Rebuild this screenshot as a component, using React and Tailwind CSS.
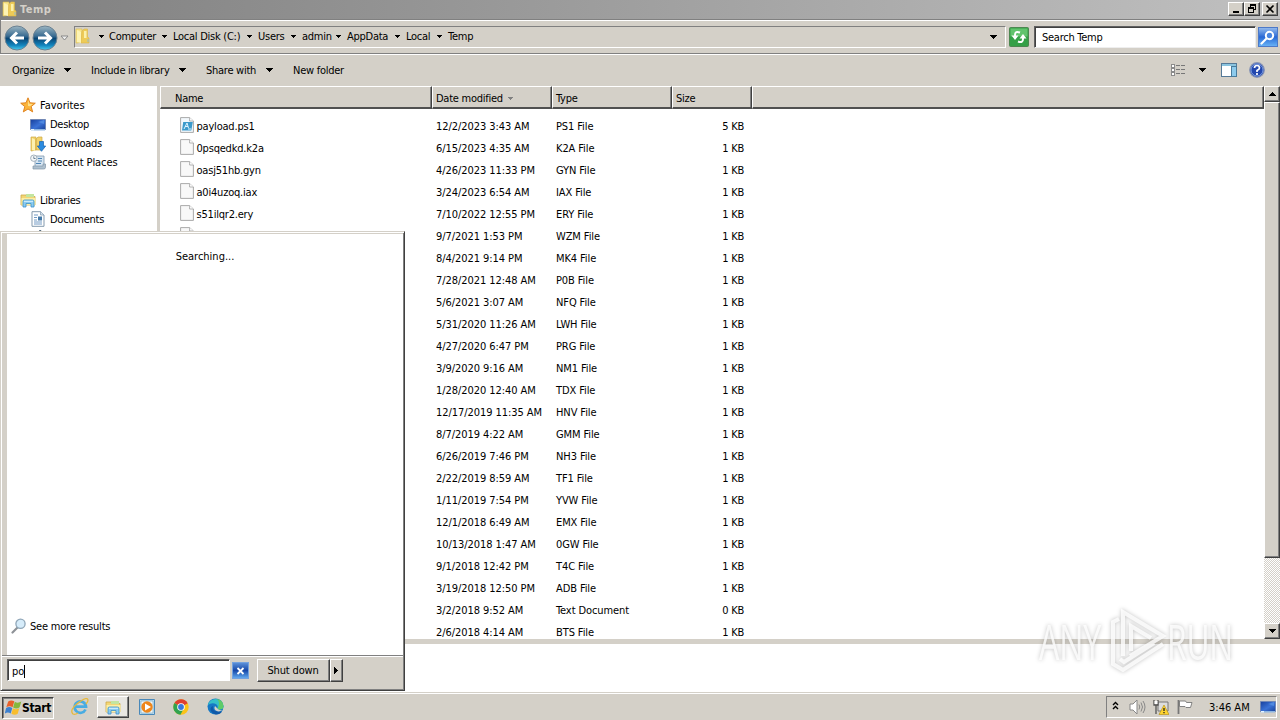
import React from 'react';
import clsx from 'clsx';

const FILES = [
  ['payload.ps1', '12/2/2023 3:43 AM', 'PS1 File', '5 KB'],
  ['0psqedkd.k2a', '6/15/2023 4:35 AM', 'K2A File', '1 KB'],
  ['oasj51hb.gyn', '4/26/2023 11:33 PM', 'GYN File', '1 KB'],
  ['a0i4uzoq.iax', '3/24/2023 6:54 AM', 'IAX File', '1 KB'],
  ['s51ilqr2.ery', '7/10/2022 12:55 PM', 'ERY File', '1 KB'],
  ['', '9/7/2021 1:53 PM', 'WZM File', '1 KB'],
  ['', '8/4/2021 9:14 PM', 'MK4 File', '1 KB'],
  ['', '7/28/2021 12:48 AM', 'P0B File', '1 KB'],
  ['', '5/6/2021 3:07 AM', 'NFQ File', '1 KB'],
  ['', '5/31/2020 11:26 AM', 'LWH File', '1 KB'],
  ['', '4/27/2020 6:47 PM', 'PRG File', '1 KB'],
  ['', '3/9/2020 9:16 AM', 'NM1 File', '1 KB'],
  ['', '1/28/2020 12:40 AM', 'TDX File', '1 KB'],
  ['', '12/17/2019 11:35 AM', 'HNV File', '1 KB'],
  ['', '8/7/2019 4:22 AM', 'GMM File', '1 KB'],
  ['', '6/26/2019 7:46 PM', 'NH3 File', '1 KB'],
  ['', '2/22/2019 8:59 AM', 'TF1 File', '1 KB'],
  ['', '1/11/2019 7:54 PM', 'YVW File', '1 KB'],
  ['', '12/1/2018 6:49 AM', 'EMX File', '1 KB'],
  ['', '10/13/2018 1:47 AM', '0GW File', '1 KB'],
  ['', '9/1/2018 12:42 PM', 'T4C File', '1 KB'],
  ['', '3/19/2018 12:50 PM', 'ADB File', '1 KB'],
  ['', '3/2/2018 9:52 AM', 'Text Document', '0 KB'],
  ['', '2/6/2018 4:14 AM', 'BTS File', '1 KB'],
];

const CRUMBS = [
  { label: 'Computer', width: 'w-[64px]' },
  { label: 'Local Disk (C:)', width: 'w-[85px]' },
  { label: 'Users', width: 'w-[44px]' },
  { label: 'admin', width: 'w-[45px]' },
  { label: 'AppData', width: 'w-[59px]' },
  { label: 'Local', width: 'w-[42px]' },
  { label: 'Temp', width: 'w-[40px]' },
];

const RAISED = 'bg-[#d4d0c8] border border-t-white border-l-white border-r-[#404040] border-b-[#404040] shadow-[inset_-1px_-1px_0_#808080]';
const SUNKEN = 'border border-t-[#808080] border-l-[#808080] border-r-white border-b-white';

function Caret({ small, className }) {
  return small ? (
    <svg width="5" height="3" shapeRendering="crispEdges" className={clsx('shrink-0', className)}>
      <path d="M0 0h5v1H0zM1 1h3v1H1zM2 2h1v1H2z" fill="currentColor" />
    </svg>
  ) : (
    <svg width="7" height="4" shapeRendering="crispEdges" className={clsx('shrink-0', className)}>
      <path d="M0 0h7v1H0zM1 1h5v1H1zM2 2h3v1H2zM3 3h1v1H3z" fill="currentColor" />
    </svg>
  );
}

function FolderIcon({ size = 16, className }) {
  return (
    <svg width={size} height={size} viewBox="0 0 16 16" className={clsx('shrink-0', className)}>
      <path d="M1 1h6v13l-5 1H1z" fill="#f7e48c" stroke="#d9b94c" strokeWidth=".6" />
      <path d="M7 3l2-2h3.500v8l1.500 1v5H6z" fill="#eecb57" stroke="#dcb548" strokeWidth=".6" />
      <path d="M2 2l4 2v11l-4-1z" fill="#fdf3b4" />
      <path d="M9 3h2.500v7H9z" fill="#fbf0aa" />
      <path d="M12.500 11h1v3h-1z" fill="#93b9cc" />
    </svg>
  );
}

function LibraryIcon({ size = 17, className }) {
  return (
    <svg width={size} height={size} viewBox="0 0 17 17" className={clsx('shrink-0', className)}>
      <path d="M1 3h5l1 1.500h8V13H1z" fill="#f3d675" stroke="#cda94a" strokeWidth=".8" />
      <path d="M6 2h8v3H6z" fill="#c3e5a0" />
      <path d="M1.500 6h14v7h-14z" fill="#fbeea5" />
      <path d="M3 9.500Q3 8 4.500 8h8Q14 8 14 9.500V15h-3v-3.500H6V15H3z" fill="#8acbf0" stroke="#3c91c9" strokeWidth=".8" />
      <path d="M4 9.300h9" stroke="#d9f2ff" />
    </svg>
  );
}

function StarIcon() {
  return (
    <svg width="16" height="16" viewBox="0 0 16 16" className="relative -top-px shrink-0">
      <path d="M8 .8l2 5 5.300.4-4.100 3.400 1.500 5.300L8 12l-4.700 2.900 1.500-5.300L.7 6.200 6 5.800z" fill="#fbb43a" stroke="#dd7c16" strokeWidth=".9" strokeLinejoin="round" />
      <path d="M8 3l1.200 3.700 3.800.4-3 2.100L8 9z" fill="#fee08a" />
    </svg>
  );
}

function DesktopIcon() {
  return (
    <svg width="16" height="14" viewBox="0 0 16 14" className="shrink-0">
      <defs>
        <linearGradient id="desk" x1="0" y1="0" x2="1" y2="1">
          <stop offset="0" stopColor="#173f9c" />
          <stop offset=".55" stopColor="#3a72d6" />
          <stop offset="1" stopColor="#1a4299" />
        </linearGradient>
      </defs>
      <path d="M.5 1.500h15v10H.5z" fill="url(#desk)" stroke="#7288b5" />
      <path d="M1 11h14v1.500H1z" fill="#8fb7e2" />
      <path d="M1 11h3v1.500H1z" fill="#e6f4ff" />
      <path d="M8 4l6-2v4z" fill="#5f9be8" opacity=".6" />
    </svg>
  );
}

function DownloadsIcon() {
  return (
    <svg width="16" height="16" viewBox="0 0 16 16" className="shrink-0">
      <path d="M1 1h5v13l-5 1zM6 3l2-2h4v13H6z" fill="#f2d36b" stroke="#cfab45" strokeWidth=".7" />
      <path d="M2 2l3 1.500V15l-3-1z" fill="#fcf1b0" />
      <path d="M9.500 5.500h4V10h2.200l-4.200 5.300L7.300 10h2.200z" fill="#2b8be0" stroke="#1661b0" strokeWidth=".7" />
    </svg>
  );
}

function RecentIcon() {
  return (
    <svg width="16" height="16" viewBox="0 0 16 16" className="relative -top-px shrink-0">
      <path d="M5 2h9v11H5z" fill="#d5e4f1" stroke="#8197ad" strokeWidth=".8" />
      <path d="M3 12h10v-2h2.500v3.500q0 1.500-2 1.500H3z" fill="#aec0cf" stroke="#8295a6" strokeWidth=".7" />
      <path d="M8 4.500h4M8 7h4M6 9.500h5" stroke="#4e85b5" />
      <circle cx="3.800" cy="4.200" r="3.200" fill="#f4f7f9" stroke="#9aa8b4" strokeWidth=".9" />
      <path d="M3.800 2.300v2.200h1.800" stroke="#526a80" fill="none" strokeWidth=".8" />
    </svg>
  );
}

function DocumentIcon() {
  return (
    <svg width="14" height="16" viewBox="0 0 14 16" className="relative -top-px shrink-0">
      <path d="M1 .7h8.500L13 4v11.300H1z" fill="#fff" stroke="#8399ad" />
      <path d="M9.500.7V4H13" fill="#d7e3ee" stroke="#8399ad" strokeWidth=".7" />
      <path d="M3 4h4M3 6.500h3M3 9h3M3 11h8M3 13h8" stroke="#628fbd" strokeWidth=".9" />
      <path d="M7 5.500h4v4H7z" fill="#4479a8" />
    </svg>
  );
}

function MusicIcon() {
  return (
    <svg width="14" height="16" viewBox="0 0 14 16" className="relative -top-px shrink-0">
      <path d="M7 12V0q1 3 4 4" fill="none" stroke="#596d7c" strokeWidth="1.600" />
      <ellipse cx="5" cy="12.500" rx="3" ry="2.300" fill="#2b7ec3" />
    </svg>
  );
}

function FileIcon({ script }) {
  return (
    <svg width="14" height="16" viewBox="0 0 14 16" className="relative -top-px shrink-0">
      <path d="M.6.6h9L13.400 4v11.400H.6z" fill={script ? '#f3f9fd' : '#f8f8f8'} stroke="#a0a0a0" strokeWidth=".9" />
      <path d="M9.600.6V4h3.800" fill="#fff" stroke="#a0a0a0" strokeWidth=".8" />
      {script && (
        <>
          <path d="M3.200 5h9.600l-1.500 8.500H2z" fill="#3c9acb" />
          <path d="M4 12l3-6 1.500 5M8 12h3M5 9.500h3" stroke="#dff4ff" fill="none" />
        </>
      )}
    </svg>
  );
}

function NavButton({ back }) {
  return (
    <svg width="26" height="26" viewBox="0 0 26 26" className="shrink-0">
      <defs>
        <linearGradient id={back ? 'nb' : 'nf'} x1="0" y1="0" x2="0" y2="1">
          <stop offset="0" stopColor="#9db6c2" />
          <stop offset=".42" stopColor="#3a6c92" />
          <stop offset=".52" stopColor="#0a4675" />
          <stop offset=".8" stopColor="#1284bd" />
          <stop offset="1" stopColor="#49cbed" />
        </linearGradient>
      </defs>
      <circle cx="13" cy="13" r="12" fill={back ? 'url(#nb)' : 'url(#nf)'} stroke="#6c8292" strokeWidth="1" />
      <path
        d="M20 13H8M13 7.500L7.500 13l5.500 5.500"
        transform={back ? undefined : 'rotate(180 13 13)'}
        fill="none"
        stroke="#fff"
        strokeWidth="3"
      />
    </svg>
  );
}

function Magnifier({ className, light }) {
  return (
    <svg width="16" height="16" viewBox="0 0 16 16" className={clsx('shrink-0', className)}>
      <path d="M6.500 9.500L1.500 14.500" stroke={light ? '#fff' : '#8e9297'} strokeWidth="2.200" strokeLinecap="round" />
      <circle
        cx="9.500"
        cy={light ? 6.5 : 5.8}
        r={light ? 3.7 : 4.6}
        fill={light ? '#4a86e0' : '#d6ecfa'}
        stroke={light ? '#fff' : '#8fa6b8'}
        strokeWidth={light ? 2 : 1.3}
      />
    </svg>
  );
}

function TitleBar() {
  return (
    <div className="flex h-[19px] items-center bg-linear-to-r from-[#808080] to-[#c0c0c0] pl-[2px]">
      <FolderIcon className="relative -top-px mr-[2px]" />
      <span className="flex-1 font-bold text-[#d4d0c8] tracking-[0.5px]">Temp</span>
      <div className="relative -top-px flex pr-[2px]">
        <span className={`flex h-[14px] w-4 items-center justify-center ${RAISED}`}>
          <svg width="10" height="10" shapeRendering="crispEdges"><path d="M2 7h6v2H2z" /></svg>
        </span>
        <span className={`flex h-[14px] w-4 items-center justify-center ${RAISED}`}>
          <svg width="10" height="10" shapeRendering="crispEdges">
            <path d="M3 0h6v2H3zM3 2h1v1H3zM8 2h1v4H8zM7 5h1v1H7zM1 3h6v2H1zM1 5h1v4H1zM6 5h1v4H6zM1 8h6v1H1z" />
          </svg>
        </span>
        <span className={`ml-[2px] flex h-[14px] w-4 items-center justify-center ${RAISED}`}>
          <svg width="10" height="10" viewBox="0 0 10 10"><path d="M1.500 1.500l7 7M8.500 1.500l-7 7" stroke="#000" strokeWidth="1.600" /></svg>
        </span>
      </div>
    </div>
  );
}

function AddressBar() {
  return (
    <div className="flex h-[35px] items-center border-t border-b border-l border-[#808080] pl-[3px] shadow-[inset_0_1px_0_#fff,0_1px_0_#fff]">
      <span className="mt-[2px] flex gap-[2px]">
        <NavButton back />
        <NavButton />
      </span>
      <svg width="9" height="6" className="mt-[2px] ml-[2px] shrink-0"><path d="M1 1h7L4.500 5z" fill="#eee" stroke="#898989" /></svg>
      <div className={`ml-[5px] mr-[3px] flex h-[22px] flex-1 items-center ${SUNKEN}`}>
        <FolderIcon className="-mt-px" />
        <Caret small className="ml-2" />
        <div className="ml-[4px] flex flex-1">
          {CRUMBS.map((c, i) => (
            <span key={c.label} className={`flex items-center justify-between pl-px whitespace-nowrap ${c.width}`}>
              {c.label}
              {i < CRUMBS.length - 1 && <Caret small className="mr-[5px]" />}
            </span>
          ))}
        </div>
        <Caret className="mr-[8px]" />
      </div>
      <svg width="20" height="20" viewBox="0 0 20 20" className="shrink-0">
        <rect x=".5" y=".5" width="19" height="19" rx="1" fill="#35a047" stroke="#4c8750" />
        <path d="M1.500 1.500h17v8h-17z" fill="#62c36d" />
        <path d="M11 5.500Q6 3.500 6 8v2M9 14.500q5 2 5-2.500v-2" fill="none" stroke="#fff" strokeWidth="2" />
        <path d="M2.500 8.500h7L6 13zM10.500 11.500h7L14 7z" fill="#fff" />
      </svg>
      <div className="ml-[5px] flex h-[22px] w-[222px] items-center border border-t-[#606060] border-l-[#606060] border-r-[#eee] border-b-[#eee] bg-white pt-[2px] pl-[7px] shadow-[inset_1px_1px_0_#404040]">
        Search Temp
      </div>
      <span className="ml-[2px] mr-[2px] flex size-5 items-center justify-center border border-[#4d79c7] bg-linear-to-b from-[#91b8eb] via-[#2868d5] to-[#67b1f5]">
        <Magnifier light />
      </span>
    </div>
  );
}

function Toolbar() {
  return (
    <div className="flex h-[32px] items-center pl-3">
      <span className="flex w-[79px] items-center">Organize<Caret className="ml-auto mr-5" /></span>
      <span className="flex w-[115px] items-center">Include in library<Caret className="ml-auto mr-5" /></span>
      <span className="flex w-[87px] items-center">Share with<Caret className="ml-auto mr-5" /></span>
      <span className="flex-1">New folder</span>
      <svg width="16" height="14" shapeRendering="crispEdges">
        <path d="M1 1h3v3H1zM1 5h3v3H1zM1 9h3v3H1z" fill="#fff" stroke="#8b8b8b" />
        <path d="M6 2h4M11 2h4M6 6h4M11 6h4M6 10h4M11 10h4" stroke="#777" />
      </svg>
      <Caret className="ml-[13px]" />
      <svg width="16" height="14" shapeRendering="crispEdges" className="ml-[15px]">
        <path d="M.5.5h15v13H.5z" fill="#fff" stroke="#557997" />
        <path d="M1 1h14v2H1z" fill="#8ac4df" />
        <path d="M10 3h5v10h-5z" fill="#8dcbed" stroke="#487b9c" />
      </svg>
      <svg width="16" height="16" viewBox="0 0 16 16" className="ml-3 mr-[15px]">
        <circle cx="8" cy="8" r="7.300" fill="#2448ae" stroke="#8995b5" strokeWidth="1.200" />
        <circle cx="8" cy="8" r="6" fill="none" stroke="#8fb0ec" strokeWidth=".8" />
        <path d="M5.500 6q0-2.500 2.500-2.500T10.500 6Q10.500 7.300 8 8.500V10M8 11v2" fill="none" stroke="#fff" strokeWidth="1.700" />
      </svg>
    </div>
  );
}

function Sidebar() {
  return (
    <div className="w-[157px] shrink-0 overflow-hidden bg-white pt-[10px]">
      <div className="flex h-[19px] items-center gap-1 pl-5 tracking-[0px]"><StarIcon />Favorites</div>
      <div className="flex h-[19px] items-center gap-1 pl-[30px]"><DesktopIcon />Desktop</div>
      <div className="flex h-[19px] items-center gap-1 pl-[30px]"><DownloadsIcon />Downloads</div>
      <div className="flex h-[19px] items-center gap-1 pl-[30px] tracking-[-0.1px]"><RecentIcon />Recent Places</div>
      <div className="mt-[19px] flex h-[19px] items-center gap-[3px] pl-5"><LibraryIcon />Libraries</div>
      <div className="flex h-[19px] items-center gap-[5px] pl-[31px]"><DocumentIcon />Documents</div>
      <div className="flex h-[19px] items-center gap-1 pl-[33px]"><MusicIcon />Music</div>
    </div>
  );
}

function HeaderCell({ className, children }) {
  return (
    <div className={clsx('flex items-center border-t border-b-2 border-l border-r border-t-white border-l-white border-r-[#404040] border-b-[#505050] pt-[2px] shadow-[inset_-1px_0_0_#808080]', className)}>
      {children}
    </div>
  );
}

function FileList() {
  return (
    <div className="flex min-w-0 flex-1 flex-col overflow-hidden bg-white">
      <div className="flex h-[23px] shrink-0 bg-[#d4d0c8]">
        <HeaderCell className="w-[272px] pl-[14px]">Name</HeaderCell>
        <HeaderCell className="w-[120px] pl-[3px]">
          Date modified<Caret small className="ml-[5px] text-[#808080]" />
        </HeaderCell>
        <HeaderCell className="w-[120px] pl-[3px]">Type</HeaderCell>
        <HeaderCell className="w-[80px] pl-[3px]">Size</HeaderCell>
        <HeaderCell className="flex-1" />
      </div>
      <div className="min-h-0 flex-1 overflow-hidden pt-[6px]">
        {FILES.map(([name, date, type, size], i) => (
          <div key={date} className="flex h-[22px] items-center whitespace-nowrap">
            <div className="flex w-[276px] items-center gap-[3px] pl-[19.5px] tracking-[-0.2px]">
              <FileIcon script={i === 0} />
              {name}
            </div>
            <div className="w-[120px] tracking-[-0.06px]">{date}</div>
            <div className="w-[120px] tracking-[-0.1px]">{type}</div>
            <div className="w-[68px] text-right">{size}</div>
          </div>
        ))}
      </div>
    </div>
  );
}

function Scrollbar() {
  return (
    <div className="flex w-4 shrink-0 flex-col bg-[repeating-conic-gradient(#d4d0c8_0_25%,#fff_0_50%)] bg-size-[2px_2px]">
      <span className={`flex h-4 items-center justify-center ${RAISED}`}><Caret className="rotate-180" /></span>
      <span className={`h-[456px] ${RAISED}`} />
      <span className={`mt-auto flex h-4 items-center justify-center ${RAISED}`}><Caret /></span>
    </div>
  );
}

function StartMenu() {
  return (
    <div className="absolute top-[231px] left-0 flex h-[460px] w-[405px] flex-col border border-t-[#d4d0c8] border-l-[#d4d0c8] border-r-[#404040] border-b-[#404040] bg-[#d4d0c8] pr-px pb-px shadow-[inset_1px_1px_0_#fff,inset_-1px_-1px_0_#808080]">
      <div className="mt-[2px] ml-[6px] flex h-[421px] flex-col bg-white">
        <div className="pt-4 text-center tracking-[0px]">Searching...</div>
        <div className="mt-auto mb-[21px] flex items-center gap-[3px] pl-1 tracking-[-0.2px]">
          <Magnifier />
          See more results
        </div>
      </div>
      <div className="ml-px flex flex-1 items-start border-t border-[#808080] pt-[3px] pl-[5px] shadow-[inset_0_1px_0_#fff]">
        <div className="flex h-[22px] w-[223px] items-center border border-t-[#606060] border-l-[#606060] border-r-white border-b-white bg-white pt-[2px] pl-1 tracking-[0px] shadow-[inset_1px_1px_0_#404040]">
          po<span className="h-[13px] w-px bg-black" />
        </div>
        <span className="mt-[3px] ml-[2px] flex h-[17px] w-[17px] items-center justify-center border border-[#73a1df] bg-linear-to-b from-[#5b8fd8] via-[#1747a8] to-[#62a7ed]">
          <svg width="9" height="8" viewBox="0 0 9 8"><path d="M1.500 1l6 6M7.500 1l-6 6" stroke="#fff" strokeWidth="1.800" /></svg>
        </span>
        <span className={`ml-2 flex h-[23px] w-[73px] items-center justify-center pr-px pb-px tracking-[-0.15px] ${RAISED}`}>Shut down</span>
        <span className={`flex h-[23px] w-[13px] items-center justify-center pr-[2px] pb-px ${RAISED}`}>
          <svg width="4" height="7" shapeRendering="crispEdges"><path d="M0 0h1v7H0zM1 1h1v5H1zM2 2h1v3H2zM3 3h1v1H3z" /></svg>
        </span>
      </div>
    </div>
  );
}

function Watermark() {
  return (
    <svg width="204" height="76" viewBox="0 0 204 76" className="absolute top-[606px] left-[1035px] overflow-visible drop-shadow-[0_0_2px_rgba(0,0,0,0.3)]">
      <g fill="#fff" opacity=".8" fontFamily="'Open Sans', sans-serif" fontSize="49">
        <text x="4" y="54" textLength="62" lengthAdjust="spacingAndGlyphs">ANY</text>
        <text x="132" y="54" textLength="66" lengthAdjust="spacingAndGlyphs">RUN</text>
      </g>
      <g fill="none" stroke="#fff" strokeWidth="4" opacity=".8">
        <path d="M88 50V6l40 24-33 20" />
        <path d="M96 45V20l20 12" />
        <path d="M84 13l-6 3v42l10 6 40-26" />
        <path d="M85 53l4 3 30-19" />
      </g>
    </svg>
  );
}

function StartLogo() {
  return (
    <svg width="17" height="17" viewBox="0 0 17 17" className="shrink-0">
      <path d="M3.200 2.500Q6 .5 9.300 2.300L7.600 8.200q-3-2-6.300 0z" fill="#e8602a" />
      <path d="M9.800 2.700q3 2 6.500-.2l-1.700 5.700q-3 2.300-6.500.3z" fill="#85b83c" />
      <path d="M1.100 9q3-2 6.200 0L5.700 14.500q-3-2-6 .2z" fill="#3c80cf" />
      <path d="M7.900 9.200q3 2 6.400 0l-1.600 5.600q-3 2-6.300 0z" fill="#f8bd2c" />
    </svg>
  );
}

function Taskbar() {
  return (
    <div className="flex h-[28px] shrink-0 items-center border-t border-[#d4d0c8] pl-[2px] shadow-[inset_0_1px_0_#fff]">
      <div className="mt-[2px] flex h-[22px] w-[52px] items-center border border-t-[#404040] border-l-[#404040] border-r-white border-b-white pl-[2px] text-xs font-bold tracking-[-0.35px] shadow-[inset_1px_1px_0_#808080]">
        <StartLogo />
        Start
      </div>
      <svg width="18" height="18" viewBox="0 0 18 18" className="ml-[17px]">
        <path d="M14.500 11.500A5.700 5.700 0 1 1 15 8.700H5" fill="none" stroke="#49ace2" strokeWidth="2.700" />
        <path d="M2 16Q-2 12 7 5t10-3q0 2-2 4M2 16q2 1 5-1" fill="none" stroke="#e7b93b" strokeWidth="1.300" />
      </svg>
      <div className={`mt-[1px] ml-[8px] flex h-[22px] w-8 items-center justify-center ${RAISED} bg-[#e9e7e2]`}>
        <LibraryIcon />
      </div>
      <svg width="16" height="16" viewBox="0 0 16 16" className="ml-[10px]">
        <path d="M.5.5h15v15H.5z" fill="#b8ddf2" stroke="#4988b9" />
        <path d="M2 2h12v12H2z" fill="#eef7fb" stroke="#83a9c2" strokeWidth=".7" />
        <circle cx="8" cy="8" r="5.700" fill="#ee861b" />
        <path d="M6 4.500l6 3.500-6 3.500z" fill="#fff" />
      </svg>
      <svg width="16" height="16" viewBox="0 0 16 16" className="ml-[18px]">
        <circle cx="8" cy="8" r="7.700" fill="#fbc319" />
        <path d="M8 8L1.400 4A7.700 7.700 0 0 1 14.700 4.200z" fill="#df3f32" />
        <path d="M8 8L1.400 4A7.700 7.700 0 0 0 7.400 15.700l3.300-6z" fill="#32a350" />
        <circle cx="8" cy="8" r="3.800" fill="#fff" />
        <circle cx="8" cy="8" r="2.900" fill="#3978dd" />
      </svg>
      <svg width="17" height="17" viewBox="0 0 17 17" className="ml-[18px]">
        <circle cx="8.500" cy="8.500" r="8" fill="#1678c5" />
        <path d="M.8 7A8 8 0 0 1 16.500 8q0 3.500-4 3.500-2 0-2-1 1-4-3-5Q4 4.700.8 7z" fill="#35bfc8" />
        <path d="M10 1q6 1 6.500 7 0 3.500-4 3.500-2 0-2-1Q14 5 10 1z" fill="#5ecb69" />
        <path d="M6 8q-2 6 9 5.500-1.500 3-6 3Q3 14.500 3.500 10.500 4 8.500 6 8z" fill="#1059a8" />
        <path d="M8 8q-2 4 2.500 5.300 2.500.5 5-1-4 0-5-1.800z" fill="#d4d0c8" />
      </svg>
      <div className={`mt-[1px] mr-[3px] ml-auto flex h-[22px] w-[171px] items-center ${SUNKEN}`}>
        <svg width="7" height="9" className="ml-[5px] -mt-[3px]"><path d="M1 4l2.500-2.500L6 4M1 8l2.500-2.500L6 8" fill="none" stroke="#000" strokeWidth="1.400" /></svg>
        <svg width="17" height="16" viewBox="0 0 17 16" className="ml-[10px]">
          <path d="M1 5h3l4-4v14l-4-4H1z" fill="#fff" stroke="#888" />
          <path d="M10 5.500q1.500 2.500 0 5M12 3.500q3 4.500 0 9M14 2q4 6 0 12" fill="none" stroke="#888" />
        </svg>
        <svg width="16" height="16" viewBox="0 0 16 16" className="ml-[7px]">
          <path d="M5 3h10v9H5z" fill="#ddd" stroke="#777" />
          <path d="M1 1v5h4V1M3 6v9" fill="none" stroke="#555" strokeWidth="1.300" />
          <path d="M1.500 2h3v3h-3z" fill="#fff" />
          <path d="M11 6l5 9.500H6z" fill="#ffd42f" stroke="#b28c0b" strokeWidth=".6" />
          <path d="M11 9v3M11 13v1.300" stroke="#222" strokeWidth="1.300" />
        </svg>
        <svg width="16" height="16" viewBox="0 0 16 16" className="ml-[8px]">
          <path d="M1.500 1v14" stroke="#777" strokeWidth="1.800" />
          <path d="M2.500 2h6l1 1.500h5.500l-1.500 5H9L8 7.500H2.500z" fill="#fff" stroke="#777" strokeWidth=".9" />
        </svg>
        <span className="ml-4 tracking-[0px]">3:46 AM</span>
        <span className="ml-auto flex"><DesktopIcon /></span>
      </div>
    </div>
  );
}

export default function App() {
  return (
    <div className="relative flex h-[720px] w-[1280px] flex-col overflow-hidden bg-[#d4d0c8] font-['DejaVu_Sans_Condensed','DejaVu_Sans',sans-serif] text-[11px] leading-[13px] tracking-[-0.26px] text-black">
      <TitleBar />
      <AddressBar />
      <Toolbar />
      <div className="flex h-[553px]">
        <Sidebar />
        <div className="w-[3px] shrink-0 bg-[#d4d0c8]" />
        <FileList />
        <Scrollbar />
      </div>
      <div className="h-[53px] border-t-[5px] border-[#d4d0c8] bg-white" />
      <Taskbar />
      <StartMenu />
      <Watermark />
    </div>
  );
}
